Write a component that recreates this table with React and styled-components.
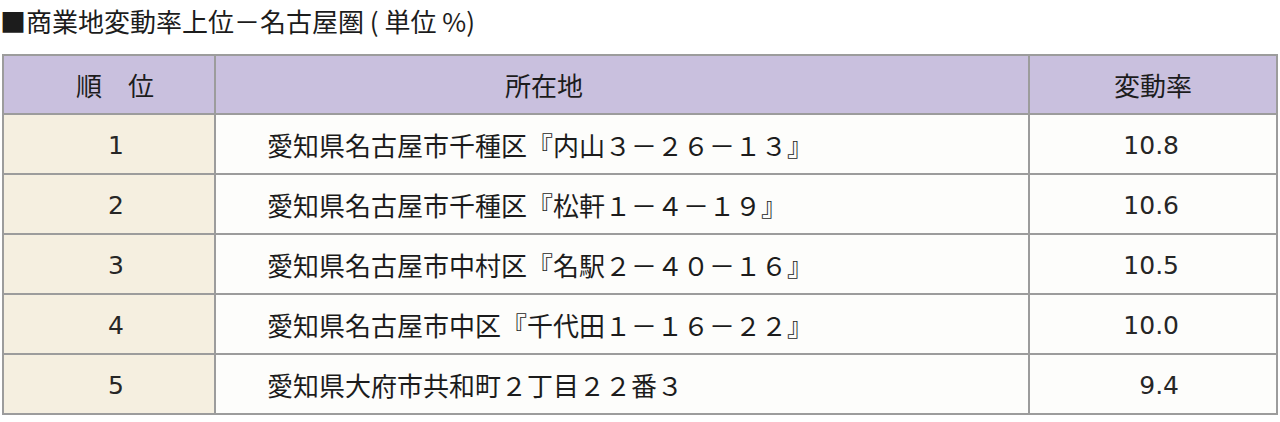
import React from "react";
import styled, { createGlobalStyle } from "styled-components";

const GlobalStyle = createGlobalStyle`
  body {
    margin: 0;
    background: #ffffff;
    font-family: "Noto Sans CJK JP", "Noto Sans", sans-serif;
    color: #1c1c1c;
  }
`;

const Page = styled.div`
  padding: 0 2px;
`;

const Title = styled.div`
  font-size: 26px;
  line-height: 42px;
  height: 42px;
  margin-left: -2px;
  margin-bottom: 12px;
  white-space: nowrap;
`;

const Grid = styled.div`
  display: grid;
  grid-template-columns: 210px 812px 246px;
  grid-template-rows: 57px repeat(5, 58px);
  gap: 2px;
  padding: 2px;
  width: 1276px;
  box-sizing: border-box;
  background: #9c9c9c;
`;

const Cell = styled.div`
  display: flex;
  align-items: center;
  font-size: ${(p) => (p.$num ? 25 : 26)}px;
  white-space: nowrap;
  font-family: ${(p) =>
    p.$num
      ? `"DejaVu Sans", "Noto Sans CJK JP", sans-serif`
      : `"Noto Sans CJK JP", "Noto Sans", sans-serif`};
  color: ${(p) => (p.$num ? "#262626" : "#1c1c1c")};
  background: ${(p) =>
    p.$kind === "head" ? "#c9c0de" : p.$kind === "rank" ? "#f5efe0" : "#fdfdfb"};
  justify-content: ${(p) =>
    p.$align === "left" ? "flex-start" : p.$align === "right" ? "flex-end" : "center"};
  padding-top: ${(p) => (p.$num ? 2 : 0)}px;
  padding-left: ${(p) => p.$pl || 0}px;
  padding-right: ${(p) => p.$pr || 0}px;
`;

const rows = [
  ["1", "愛知県名古屋市千種区『内山３－２６－１３』", "10.8"],
  ["2", "愛知県名古屋市千種区『松軒１－４－１９』", "10.6"],
  ["3", "愛知県名古屋市中村区『名駅２－４０－１６』", "10.5"],
  ["4", "愛知県名古屋市中区『千代田１－１６－２２』", "10.0"],
  ["5", "愛知県大府市共和町２丁目２２番３", "9.4"],
];

export default function App() {
  return (
    <Page>
      <GlobalStyle />
      <Title>■商業地変動率上位－名古屋圏 ( 単位 %)</Title>
      <Grid>
        <Cell $kind="head" $pl={12}>順　位</Cell>
        <Cell $kind="head" $pr={156}>所在地</Cell>
        <Cell $kind="head">変動率</Cell>
        {rows.map(([rank, place, rate]) => (
          <React.Fragment key={rank}>
            <Cell $kind="rank" $num $pl={14}>{rank}</Cell>
            <Cell $align="left" $pl={51}>{place}</Cell>
            <Cell $align="right" $num $pr={97}>{rate}</Cell>
          </React.Fragment>
        ))}
      </Grid>
    </Page>
  );
}
